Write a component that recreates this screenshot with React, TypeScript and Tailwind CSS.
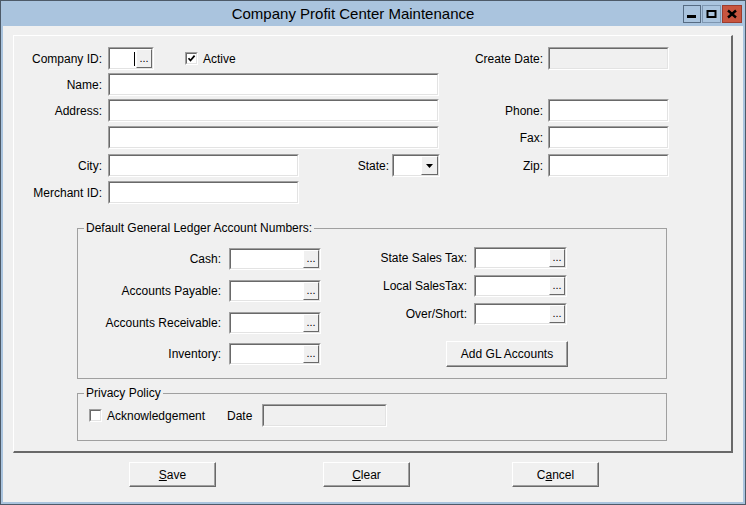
import React from "react";

type Kids = { className?: string; children?: React.ReactNode };

// sunken 3D edit box
function Box({ className = "", disabled = false, children }: Kids & { disabled?: boolean }) {
  return (
    <div className={`shrink-0 border border-t-[#a0a0a0] border-l-[#a0a0a0] border-r-white border-b-white ${className}`}>
      <div
        className={`h-full flex border border-t-[#696969] border-l-[#696969] border-r-[#e3e3e3] border-b-[#e3e3e3] ${
          disabled ? "bg-[#f0f0f0]" : "bg-white"
        }`}
      >
        {children}
      </div>
    </div>
  );
}

function Dots({ className = "ml-auto" }: { className?: string }) {
  return (
    <div
      className={`w-[16px] h-full flex items-end justify-center pb-[3px] bg-[#f0f0f0] border border-t-white border-l-white border-r-[#696969] border-b-[#696969] text-[11px] leading-none ${className}`}
    >
      ...
    </div>
  );
}

function Lookup({ className = "" }: { className?: string }) {
  return (
    <Box className={className}>
      <Dots />
    </Box>
  );
}

function Check({ checked = false, className = "" }: { checked?: boolean; className?: string }) {
  return (
    <Box className={`w-[13px] h-[13px] ${className}`}>
      {checked && (
        <svg width="9" height="9" viewBox="0 0 9 9" className="m-auto">
          <path d="M1.5 4.2 L3.5 6.5 L7.6 1.6" stroke="#000" strokeWidth="1.7" fill="none" />
        </svg>
      )}
    </Box>
  );
}

function Btn({ className = "", children }: Kids) {
  return (
    <button
      type="button"
      className={`shrink-0 flex items-center justify-center bg-[#f0f0f0] border border-t-white border-l-white border-r-[#696969] border-b-[#696969] shadow-[inset_-1px_-1px_0_#a0a0a0] ${className}`}
    >
      {children}
    </button>
  );
}

function Row({ className = "", children }: Kids) {
  return <div className={`flex items-center h-[23px] ${className}`}>{children}</div>;
}

function Left({ label, children }: { label: string; children?: React.ReactNode }) {
  return (
    <div className="w-[426px] flex items-center shrink-0">
      <span className="w-[88px] text-right">{label}</span>
      <div className="ml-[6px] flex items-center flex-1">{children}</div>
    </div>
  );
}

function Right({ label, disabled = false }: { label: string; disabled?: boolean }) {
  return (
    <div className="ml-auto flex items-center">
      <span className="mr-[5px]">{label}</span>
      <Box disabled={disabled} className="w-[121px] h-[23px]" />
    </div>
  );
}

function GlRow({ label, lw, className = "" }: { label: string; lw: string; className?: string }) {
  return (
    <div className={`flex items-center h-[22px] ${className}`}>
      <span className={`${lw} text-right`}>{label}</span>
      <Lookup className="ml-[8px] w-[92px] h-[22px]" />
    </div>
  );
}

export default function App() {
  return (
    <div className="w-[746px] h-[505px] border border-[#4d5a68] bg-[#aac4de] flex flex-col px-[2px] pb-[2px] font-['Liberation_Sans',Arial,sans-serif] text-[12px] text-black">
      {/* title bar */}
      <div className="h-[25px] flex shrink-0">
        <div className="flex-1 flex items-center justify-center pl-[20px] pt-[1px] text-[15px]">
          Company Profit Center Maintenance
        </div>
        <div className="flex items-start pt-[4px] mr-[1px]">
          <div className="w-[18px] h-[18px] border border-[#566b82]">
            <svg width="16" height="16" viewBox="0 0 16 16">
              <rect x="3" y="9" width="9" height="3" fill="#000" />
            </svg>
          </div>
          <div className="ml-[1px] w-[19px] h-[18px] border border-[#7e96b0]">
            <svg width="17" height="16" viewBox="0 0 17 16">
              <rect x="4.5" y="5" width="8" height="6" fill="none" stroke="#000" strokeWidth="2" />
            </svg>
          </div>
          <div className="ml-[1px] w-[20px] h-[18px] border border-[#9c3c2e] bg-[#c8553f]">
            <svg width="18" height="16" viewBox="0 0 18 16">
              <path d="M5 4.5 L13 11.5 M13 4.5 L5 11.5" stroke="#000" strokeWidth="2.4" />
            </svg>
          </div>
        </div>
      </div>

      {/* client area */}
      <div className="flex-1 bg-[#f0f0f0] flex flex-col">
        <div className="ml-[10px] mt-[9px] w-[720px] h-[418px] shrink-0 border-t border-l border-r-2 border-b-2 border-t-white border-l-white border-r-[#696969] border-b-[#696969] flex flex-col">
          <div className="pt-[11px] pr-[62px] flex flex-col">
            <Row>
              <span className="w-[88px] text-right">Company ID:</span>
              <Box className="ml-[6px] w-[46px] h-[23px]">
                <span className="ml-auto mr-[1px] self-center w-px h-[14px] bg-black" />
                <Dots className="" />
              </Box>
              <Check checked className="ml-[31px]" />
              <span className="ml-[5px]">Active</span>
              <Right label="Create Date:" disabled />
            </Row>
            <Row className="mt-[3px]">
              <Left label="Name:">
                <Box className="w-[331px] h-[23px]" />
              </Left>
            </Row>
            <Row className="mt-[3px]">
              <Left label="Address:">
                <Box className="w-[331px] h-[23px]" />
              </Left>
              <Right label="Phone:" />
            </Row>
            <Row className="mt-[4px]">
              <Left label="">
                <Box className="w-[331px] h-[23px]" />
              </Left>
              <Right label="Fax:" />
            </Row>
            <Row className="mt-[5px]">
              <Left label="City:">
                <Box className="w-[191px] h-[23px]" />
                <span className="ml-auto">State:</span>
                <Box className="ml-[3px] w-[48px] h-[23px]">
                  <div className="ml-auto w-[17px] h-full flex items-center justify-center bg-[#f0f0f0] border border-t-white border-l-white border-r-[#696969] border-b-[#696969]">
                    <svg width="7" height="4" viewBox="0 0 7 4">
                      <path d="M0 0 H7 L3.5 4 Z" fill="#000" />
                    </svg>
                  </div>
                </Box>
              </Left>
              <Right label="Zip:" />
            </Row>
            <Row className="mt-[4px]">
              <Left label="Merchant ID:">
                <Box className="w-[191px] h-[23px]" />
              </Left>
            </Row>
          </div>

          {/* GL accounts group */}
          <fieldset className="ml-[63px] mt-[17px] w-[590px] border border-[#a0a0a0]">
            <legend className="ml-[6px] px-[2px] leading-[15px]">Default General Ledger Account Numbers:</legend>
            <div className="flex items-start">
              <div className="flex flex-col pt-[12px] pb-[13px]">
                <GlRow label="Cash:" lw="w-[143px]" />
                <GlRow label="Accounts Payable:" lw="w-[143px]" className="mt-[10px]" />
                <GlRow label="Accounts Receivable:" lw="w-[143px]" className="mt-[10px]" />
                <GlRow label="Inventory:" lw="w-[143px]" className="mt-[9px]" />
              </div>
              <div className="flex flex-col pt-[11px]">
                <div className="flex items-center h-[22px]">
                  <span className="w-[146px] text-right">State Sales Tax:</span>
                  <Lookup className="ml-[7px] w-[93px] h-[22px]" />
                </div>
                <div className="mt-[6px] flex items-center h-[22px]">
                  <span className="w-[146px] text-right">Local SalesTax:</span>
                  <Lookup className="ml-[7px] w-[93px] h-[22px]" />
                </div>
                <div className="mt-[6px] flex items-center h-[22px]">
                  <span className="w-[146px] text-right">Over/Short:</span>
                  <Lookup className="ml-[7px] w-[93px] h-[22px]" />
                </div>
                <Btn className="mt-[16px] ml-[125px] w-[122px] h-[26px]">Add GL Accounts</Btn>
              </div>
            </div>
          </fieldset>

          {/* privacy group */}
          <fieldset className="ml-[63px] mt-[7px] w-[590px] border border-[#a0a0a0]">
            <legend className="ml-[6px] px-[2px] leading-[15px]">Privacy Policy</legend>
            <div className="flex items-center mt-[3px] mb-[13px] h-[23px]">
              <Check className="ml-[11px]" />
              <span className="ml-[5px] w-[120px]">Acknowledgement</span>
              <span className="w-[35px]">Date</span>
              <Box disabled className="w-[125px] h-[23px]" />
            </div>
          </fieldset>
        </div>

        {/* bottom buttons */}
        <div className="flex mt-[9px]">
          <Btn className="ml-[126px] w-[87px] h-[25px]">
            <span>
              <span className="underline">S</span>ave
            </span>
          </Btn>
          <Btn className="ml-[107px] w-[87px] h-[25px]">
            <span>
              <span className="underline">C</span>lear
            </span>
          </Btn>
          <Btn className="ml-[102px] w-[87px] h-[25px]">
            <span>
              C<span className="underline">a</span>ncel
            </span>
          </Btn>
        </div>
      </div>
    </div>
  );
}
